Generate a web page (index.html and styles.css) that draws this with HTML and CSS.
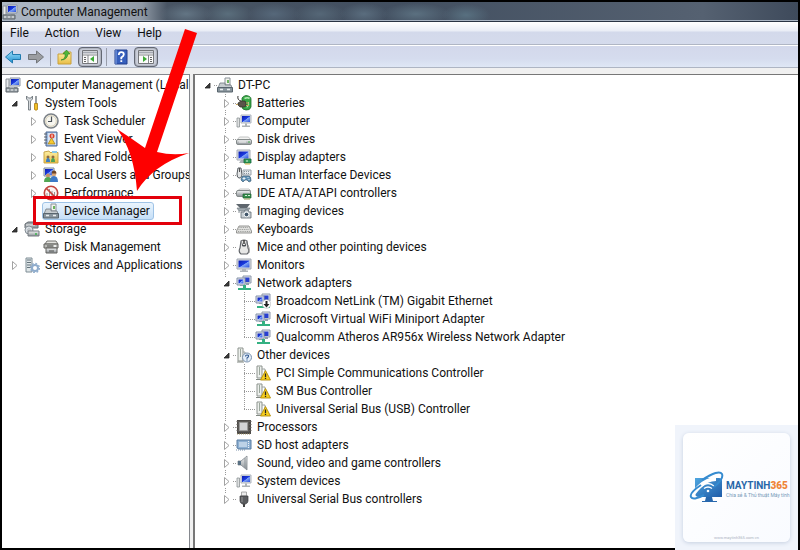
FILE: index.html
```html
<!DOCTYPE html>
<html lang="en">
<head>
<meta charset="utf-8">
<title>Computer Management</title>
<link rel="stylesheet" href="styles.css">
</head>
<body>
<svg class="defs" aria-hidden="true">
  <defs>
    <linearGradient id="metal" x1="0" y1="0" x2="0" y2="1"><stop offset="0" stop-color="#f4f5f5"/><stop offset="1" stop-color="#8a9095"/></linearGradient>
    <linearGradient id="screen" x1="0" y1="0" x2="1" y2="1"><stop offset="0" stop-color="#0a1bb0"/><stop offset=".5" stop-color="#1c3ce0"/><stop offset=".55" stop-color="#7fa4f8"/><stop offset="1" stop-color="#2b50dc"/></linearGradient>
    <linearGradient id="sky" x1="0" y1="0" x2="0" y2="1"><stop offset="0" stop-color="#9ee0fa"/><stop offset="1" stop-color="#1e8fd0"/></linearGradient>
    <linearGradient id="folder" x1="0" y1="0" x2="0" y2="1"><stop offset="0" stop-color="#fdf1a8"/><stop offset="1" stop-color="#e9bd45"/></linearGradient>
    <linearGradient id="brand" x1="0" y1="0" x2="1" y2="1"><stop offset="0" stop-color="#4fa6e0"/><stop offset="1" stop-color="#1f5ca8"/></linearGradient>
  </defs>
  <symbol id="i-manage" viewBox="0 0 16 16">
    <path d="M5 1h10v8H5z" fill="#dfe3ea" stroke="#8b93a0"/><path d="M6 2h8v6H6z" fill="url(#screen)"/>
    <path d="M1 2h3v9H1z" fill="#e8eaec" stroke="#8a9096"/><path d="M9 10h3v2H9z" fill="#a0a6ae"/>
    <path d="M1 11h12v4H1z" fill="#9aa2a8" stroke="#5c646a"/><path d="M2 13h2m2 0h2m2 0h2" stroke="#eef0f0"/>
  </symbol>
  <symbol id="i-tools" viewBox="0 0 16 16">
    <path d="M2.500 1v3l2 2v9h2V6l2-2V1L7 3H4.500z" fill="#d5d9dc" stroke="#6f777d" stroke-width=".9"/>
    <path d="M12 1v8" stroke="#80878c" stroke-width="1.600"/><path d="M10.500 8.500h3v6q-1.500 1.500-3 0z" fill="#f2c025" stroke="#a87a10" stroke-width=".8"/>
  </symbol>
  <symbol id="i-clock" viewBox="0 0 16 16">
    <circle cx="8" cy="8" r="7" fill="#f7f6ef" stroke="#7c8288" stroke-width="1.600"/><circle cx="8" cy="8" r="5.300" fill="none" stroke="#d6cfb8"/>
    <path d="M8.500 3.500v5H5" fill="none" stroke="#4a5158" stroke-width="1.200"/>
  </symbol>
  <symbol id="i-event" viewBox="0 0 16 16">
    <path d="M3 1h11v14H3z" fill="#9db9de" stroke="#4c6894"/><path d="M1 3h3M1 6h3M1 9h3M1 12h3" stroke="#5a6068"/>
    <path d="M5 2h8v12H5z" fill="#d8e4f4"/><circle cx="9" cy="5" r="2.500" fill="#d9412c"/><path d="M9 3.500v3" stroke="#fff"/>
    <path d="M5 13l3.500-6 3.500 6z" fill="#f7ca2f" stroke="#a07a12" stroke-width=".7"/>
  </symbol>
  <symbol id="i-shared" viewBox="0 0 16 16">
    <path d="M1 3l5-1 1 1.500h8V14H1z" fill="url(#folder)" stroke="#c9a548"/><path d="M9 2h5v2H9z" fill="#8ac7e8"/>
    <circle cx="5" cy="8" r="1.500" fill="#8a6a45"/><path d="M3 13q0-4 2-4t2 4z" fill="#3f7ec0"/>
    <circle cx="10" cy="8" r="1.500" fill="#8a6a45"/><path d="M8 13q0-4 2-4t2 4z" fill="#4ea157"/>
  </symbol>
  <symbol id="i-users" viewBox="0 0 16 16">
    <path d="M1 1h10v8H1z" fill="#dfe5ee" stroke="#7f8998"/><path d="M2 2h8v6H2z" fill="url(#screen)"/>
    <circle cx="5" cy="8.500" r="2" fill="#c79266"/><path d="M1 15q0-5 4-5t4 5z" fill="#52a653"/>
    <circle cx="11" cy="7" r="2.300" fill="#d9a577"/><path d="M8.700 6.500q0-3 2.300-3t2.500 3z" fill="#6d4527"/><path d="M7 15q0-6 4-6t4 6z" fill="#3c79c7"/>
  </symbol>
  <symbol id="i-perf" viewBox="0 0 16 16">
    <circle cx="8" cy="8" r="6.700" fill="#fbf3f2" stroke="#c2453e" stroke-width="1.600"/>
    <path d="M4 11V8m2.500 4V4m2.500 8V6m2.500 5V7" stroke="#999"/><path d="M3.500 3.500l9 9" stroke="#c2453e" stroke-width="1.700"/>
  </symbol>
  <symbol id="i-devmgr" viewBox="0 0 16 16">
    <path d="M8 1h5v7H8z" fill="#f3f4ee" stroke="#899198"/><path d="M10 3h2v3h-2z" fill="#6bb45e"/>
    <path d="M3 6h5v2h6l1 3H1z" fill="#c6cccf" stroke="#717a80" stroke-width=".8"/><path d="M.5 10.500h15v4.500H.5z" fill="#88949c" stroke="#58646d"/>
    <path d="M3 12.500h3m4 0h3" stroke="#e9edef" stroke-width="1.500"/>
  </symbol>
  <symbol id="i-storage" viewBox="0 0 16 16">
    <path d="M1 3l3-2h8l2 2v4H1z" fill="#9aa1a6" stroke="#666d72"/><path d="M2 4h9" stroke="#f2f2f2"/>
    <circle cx="5" cy="9" r="4" fill="#d8dee3" stroke="#858e95"/><circle cx="5" cy="9" r="1.200" fill="#fff" stroke="#79828a" stroke-width=".6"/>
    <path d="M4 10h11v5H4z" fill="url(#metal)" stroke="#747b80"/><path d="M11 13h2" stroke="#38b34a" stroke-width="1.500"/>
  </symbol>
  <symbol id="i-diskmgmt" viewBox="0 0 16 16">
    <path d="M2 5l2-3h9l2 3z" fill="#e3e3df" stroke="#73736f"/><path d="M1 5h14v4H1z" fill="#b9bab7" stroke="#62635f"/>
    <path d="M3 9h11v5H3z" fill="url(#metal)" stroke="#62635f"/><path d="M4 7h6m-4 5h5" stroke="#51524f"/><circle cx="12" cy="7" r="1" fill="#fff"/>
  </symbol>
  <symbol id="i-services" viewBox="0 0 16 16">
    <path d="M2 1h6v14H2z" fill="#dfe6e8" stroke="#7f8d95"/><path d="M3 3h4M3 5.500h4M3 8h4M3 10.500h4" stroke="#63717a"/>
    <circle cx="11" cy="11" r="3" fill="none" stroke="#8faccc" stroke-width="2"/><circle cx="11" cy="11" r="4.500" fill="none" stroke="#8faccc" stroke-width="1.300" stroke-dasharray="1.800 1.700"/>
  </symbol>
  <symbol id="i-battery" viewBox="0 0 16 16">
    <path d="M6 3q1-2 4-2.500Q15 1 15 4v8q-1 3.500-5 3-4-.5-4-3z" fill="#36a846" stroke="#1c6c2a" stroke-width=".8"/><path d="M8.500 3.500q3-1.500 5 0" fill="none" stroke="#b5ebb3" stroke-width="1.600"/><path d="M12.500 7q1 3-1.500 5.500" fill="none" stroke="#b5ebb3"/>
    <path d="M2 1q-1 4 3 5" fill="none" stroke="#333"/><path d="M2 8l3-2h4l1 2v3l-2 1H4L2 10z" fill="#5a554a" stroke="#2e2b24" stroke-width=".7"/><path d="M0 9.500h2m8-1.500h3m-3 2.500h3" stroke="#c3a35c" stroke-width="1.100"/>
  </symbol>
  <symbol id="i-computer" viewBox="0 0 16 16">
    <path d="M5 2h10v8H5z" fill="#d9dde3" stroke="#b0b6bf"/><path d="M6 3h8v6H6z" fill="url(#screen)"/>
    <path d="M1 5h2.500v9H1z" fill="#dfe1e2" stroke="#8c9294" stroke-width=".8"/><path d="M9 10.500h2v2h3v1.500H6v-1.500h3z" fill="#adb3b7"/>
  </symbol>
  <symbol id="i-disk" viewBox="0 0 16 16">
    <path d="M1 9l2.500-3h9L15 9z" fill="#f2f2f1" stroke="#b4b6b6" stroke-width=".8"/><rect x=".5" y="8.500" width="15" height="5" rx="1.500" fill="url(#metal)" stroke="#858b8b"/>
    <path d="M3 11h7" stroke="#eee"/><path d="M12 11h2" stroke="#48aa4e"/>
  </symbol>
  <symbol id="i-display" viewBox="0 0 16 16">
    <path d="M1 1h13v10H1z" fill="#dfe1e4" stroke="#a4aab4"/><path d="M2.500 2.500h10v7h-10z" fill="url(#screen)"/><path d="M5 11h4v3H3z" fill="#aab0b5"/>
    <path d="M8 10h7v4H8z" fill="#2f9d58" stroke="#17663a" stroke-width=".8"/><path d="M9 15h5" stroke="#d9b847"/><path d="M10 11.500h2v1h-2z" fill="#d7efd9"/>
  </symbol>
  <symbol id="i-hid" viewBox="0 0 16 16">
    <path d="M2 1h3l1 7q-1 4-3 3Q1 11 1 7z" fill="#e4e6e7" stroke="#555b60"/><path d="M3.500 1v4" stroke="#555"/>
    <path d="M7 3h8v5H7z" fill="#e4e8eb" stroke="#9aa3aa"/><path d="M8 4.500h6M8 6.500h6" stroke="#8b979f" stroke-dasharray="1 1"/>
    <path d="M5 13q1-5 3-4h5q2 0 2 5l-2 1-2-2H9l-2 2z" fill="#5e91b5" stroke="#3f6078" stroke-width=".7"/><path d="M8 10v3M6.500 11.500h3m2-1h1m0 2h1" stroke="#fff" stroke-width=".8"/>
  </symbol>
  <symbol id="i-ide" viewBox="0 0 16 16">
    <path d="M1 6l3-2h9l2 2z" fill="#f4f4f4" stroke="#a9adad" stroke-width=".7"/><rect x=".5" y="5.500" width="14" height="6" rx="1.500" fill="url(#metal)" stroke="#858b8b"/>
    <path d="M7 9h8v4H7z" fill="#358f4b" stroke="#1d6030" stroke-width=".7"/><path d="M9 10.500h2m1 0h2" stroke="#d4ead8"/><path d="M8 14h6" stroke="#9a9d5a"/>
  </symbol>
  <symbol id="i-imaging" viewBox="0 0 16 16">
    <path d="M0 1h14l-3 4H4z" fill="#5e666d"/><path d="M1 5h13l-2 3H3z" fill="#a2abb1" stroke="#6a7379" stroke-width=".6"/>
    <path d="M5 9h3l1-2h3l1 2h2v6H5z" fill="#c9d0d5" stroke="#606a71" stroke-width=".8"/><circle cx="10.500" cy="11.500" r="2.300" fill="#41566a" stroke="#f0f3f5"/><path d="M2 9h2" stroke="#8a9298"/>
  </symbol>
  <symbol id="i-keyboard" viewBox="0 0 16 16">
    <path d="M3 5h10l2.500 5v2H.5v-2z" fill="#e1e1df" stroke="#8a8b88" stroke-width=".9"/><path d="M3.500 6.500h9M2.500 8.500h11M2 10.500h12" stroke="#9d9f9c" stroke-dasharray="1 .8"/>
  </symbol>
  <symbol id="i-mouse" viewBox="0 0 16 16">
    <path d="M5 2q3-2 6 0l1 7q2 4-1 6H5q-3-2-1-6z" fill="#e7e7e6" stroke="#62656a" stroke-width="1.200"/><path d="M5.500 2L6 7q2 1 4 0l.5-5-1.500 4H7z" fill="#4a4e53"/><path d="M8 1v4" stroke="#222" stroke-width="1.300"/><path d="M12 6q2 3 1 8" fill="none" stroke="#999"/>
  </symbol>
  <symbol id="i-monitor" viewBox="0 0 16 16">
    <path d="M1 2h14v10H1z" fill="#dadde2" stroke="#a1a7b2"/><path d="M2.500 3.500h11v7h-11z" fill="url(#screen)"/><path d="M6 12h4v1.500h2V15H4v-1.500h2z" fill="#b0b5bb"/>
  </symbol>
  <symbol id="i-net" viewBox="0 0 16 16">
    <path d="M7 1h8v7H7z" fill="#e2e5ea" stroke="#8d98ab"/><path d="M8.500 2.500h5V7h-5z" fill="#283fd0"/><path d="M1 3h8v7H1z" fill="#e2e5ea" stroke="#8290a8"/><path d="M2.500 4.500h5v4h-5z" fill="url(#screen)"/>
    <path d="M4 10h3v1H4zm6-2h3v2h-3z" fill="#929dad"/><path d="M7 10h3v3h5v2H2v-2h5z" fill="#34b182"/>
  </symbol>
  <symbol id="i-netdown" viewBox="0 0 16 16">
    <use href="#i-net" width="16" height="16"/><circle cx="11.500" cy="11" r="4.300" fill="#fff" stroke="#b9bcc0" stroke-width=".7"/><path d="M10.500 8h2v3h2l-3 3.500-3-3.500h2z" fill="#222"/>
  </symbol>
  <symbol id="i-other" viewBox="0 0 16 16">
    <path d="M2 1h5v13H2z" fill="#edf0ed" stroke="#8d938e"/><path d="M4.500 2v8" stroke="#9ca79d"/><path d="M1 15h7" stroke="#828983"/><path d="M7 5h2v6" fill="none" stroke="#9ca3a0"/>
    <circle cx="11" cy="10.500" r="4.500" fill="#e4eef8" stroke="#7890ac"/><path d="M9.500 9.500q0-1.500 1.500-1.500 1.700 0 1.500 1.300-.1 1-1.500 1.700v.8m0 .8v1" fill="none" stroke="#315a92" stroke-width="1.200"/>
  </symbol>
  <symbol id="i-warn" viewBox="0 0 16 16">
    <path d="M2 1h5v12H2z" fill="#edf0ed" stroke="#8d938e"/><path d="M4.500 2v8" stroke="#9ca79d"/><path d="M1 14.500h6" stroke="#828983"/><path d="M7 4h3v4" fill="none" stroke="#9ca3a0"/>
    <path d="M10.500 5.500l5 9.500h-10z" fill="#f8cf1e" stroke="#b28c0b" stroke-width=".9"/><path d="M10.500 8.500v3.500m0 .8V14" stroke="#222" stroke-width="1.300"/>
  </symbol>
  <symbol id="i-cpu" viewBox="0 0 16 16">
    <path d="M1 1h14v14H1z" fill="#4c4a48"/><path d="M0 2.500h16M0 5.500h16M0 8.500h16M0 11.500h16" stroke="#77716a" stroke-width=".5"/><path d="M2 2h11v11H2z" fill="#5c5a57"/><path d="M3.500 3.500h8v8h-8z" fill="#d3d4d6" stroke="#9a9a99"/><path d="M1 15h14" stroke="#a29468" stroke-dasharray="1 1"/>
  </symbol>
  <symbol id="i-sd" viewBox="0 0 16 16">
    <path d="M1 3h14v9H3l-2-1z" fill="#8eb0d2" stroke="#587da2"/><path d="M3 5h8v5H3z" fill="#bdd2e7"/><path d="M12.500 4v7" stroke="#f0f4f8" stroke-dasharray="1 1"/><path d="M0 13h9" stroke="#7890aa" stroke-dasharray="1 1"/>
  </symbol>
  <symbol id="i-sound" viewBox="0 0 16 16">
    <path d="M2 6h3l6-5v14l-6-5H2z" fill="url(#metal)" stroke="#80888e" stroke-width=".8"/><path d="M2 6h3v4H2z" fill="#587083"/><path d="M9 3v10" stroke="#8b9398"/>
  </symbol>
  <symbol id="i-usb" viewBox="0 0 16 16">
    <path d="M5.500 1h5v4h-5z" fill="#ececec" stroke="#989898" stroke-width=".8"/><path d="M4 5h8v5q0 2-2.500 3h-3Q4 12 4 10z" fill="#5b5d60" stroke="#393b3d" stroke-width=".7"/><path d="M6 6v5" stroke="#999" /><path d="M8 13v3" stroke="#444" stroke-width="2"/>
  </symbol>
  <symbol id="t-back" viewBox="0 0 16 16"><path d="M.5 8L7.500 2v3.500h8v5h-8V14z" fill="url(#sky)" stroke="#207aae" stroke-linejoin="round"/></symbol>
  <symbol id="t-next" viewBox="0 0 16 16"><path d="M15.500 8L8.500 2v3.500h-8v5h8V14z" fill="#9b9da1" stroke="#727579" stroke-linejoin="round"/></symbol>
  <symbol id="t-up" viewBox="0 0 16 16"><path d="M1 5h5l1-2h7v12H1z" fill="url(#folder)" stroke="#c9a03c"/><path d="M4 11q5-1 4-6H6l3.500-4L13 5h-2q-1 6-7 6z" fill="#4fb63a" stroke="#2c8120" stroke-width=".6"/></symbol>
  <symbol id="t-tree" viewBox="0 0 16 16"><path d="M.5 1.500h15v13H.5z" fill="#fbfbfb" stroke="#75777b"/><path d="M1 3.500h14" stroke="#a5a9b2" stroke-width="2"/><path d="M1 6h14M6 6v8" stroke="#85878b"/><path d="M2 8.500h2m-2 2h2m-2 2h2" stroke="#666"/><path d="M12 7v6l-4-3z" fill="#3cab35"/></symbol>
  <symbol id="t-pane" viewBox="0 0 16 16"><path d="M.5 1.500h15v13H.5z" fill="#fbfbfb" stroke="#75777b"/><path d="M1 3.500h14" stroke="#a5a9b2" stroke-width="2"/><path d="M1 6h14M10.500 6v8" stroke="#85878b"/><path d="M12 8.500h2m-2 2h2m-2 2h2" stroke="#666"/><path d="M5 7v6l4-3z" fill="#3cab35"/></symbol>
  <symbol id="t-help" viewBox="0 0 16 16"><path d="M2 1h12v14H2z" fill="#365fbd" stroke="#203f8d"/><path d="M3 1v14" stroke="#88a7e5"/><path d="M5.800 6q0-2.800 2.500-2.800T10.800 5.500q0 1.500-2.500 3v1.800m0 1v1.800" fill="none" stroke="#fff" stroke-width="1.800"/></symbol>
  <symbol id="closed" viewBox="0 0 9 9"><path d="M2.500 .5v8l4.500-4z" fill="#fff" stroke="#a2a2a2"/></symbol>
  <symbol id="open" viewBox="0 0 9 9"><path d="M7 2v5H2z" fill="#3b3b3b" stroke="#222" stroke-width=".8"/></symbol>
</svg>

<div class="window">
  <header class="titlebar">
    <svg class="icon"><use href="#i-manage"/></svg>
    <h1>Computer Management</h1>
  </header>
  <nav class="menubar" aria-label="Menu">
    <button>File</button><button>Action</button><button>View</button><button>Help</button>
  </nav>
  <div class="toolbar" role="toolbar" aria-label="Tools">
    <button aria-label="Back"><svg class="icon"><use href="#t-back"/></svg></button>
    <button aria-label="Forward"><svg class="icon"><use href="#t-next"/></svg></button>
    <span class="divider"></span>
    <button aria-label="Up one level"><svg class="icon"><use href="#t-up"/></svg></button>
    <button class="pressed" aria-pressed="true" aria-label="Console tree"><svg class="icon"><use href="#t-tree"/></svg></button>
    <span class="divider"></span>
    <button aria-label="Help"><svg class="icon"><use href="#t-help"/></svg></button>
    <button class="pressed" aria-pressed="true" aria-label="Action pane"><svg class="icon"><use href="#t-pane"/></svg></button>
  </div>

  <div class="panes">
    <aside class="console">
      <ul class="tree" role="tree" aria-label="Console">
        <li role="treeitem">
          <div class="row"><svg class="icon"><use href="#i-manage"/></svg><span class="label">Computer Management (Local</span></div>
          <ul role="group">
            <li role="treeitem">
              <div class="row"><button class="twisty" aria-label="Collapse"><svg><use href="#open"/></svg></button><svg class="icon"><use href="#i-tools"/></svg><span class="label">System Tools</span></div>
              <ul class="nested" role="group">
                <li role="treeitem"><div class="row"><button class="twisty" aria-label="Expand"><svg><use href="#closed"/></svg></button><svg class="icon"><use href="#i-clock"/></svg><span class="label">Task Scheduler</span></div></li>
                <li role="treeitem"><div class="row"><button class="twisty" aria-label="Expand"><svg><use href="#closed"/></svg></button><svg class="icon"><use href="#i-event"/></svg><span class="label">Event Viewer</span></div></li>
                <li role="treeitem"><div class="row"><button class="twisty" aria-label="Expand"><svg><use href="#closed"/></svg></button><svg class="icon"><use href="#i-shared"/></svg><span class="label">Shared Folders</span></div></li>
                <li role="treeitem"><div class="row"><button class="twisty" aria-label="Expand"><svg><use href="#closed"/></svg></button><svg class="icon"><use href="#i-users"/></svg><span class="label">Local Users and Groups</span></div></li>
                <li role="treeitem"><div class="row"><button class="twisty" aria-label="Expand"><svg><use href="#closed"/></svg></button><svg class="icon"><use href="#i-perf"/></svg><span class="label">Performance</span></div></li>
                <li role="treeitem" aria-selected="true"><div class="row"><span class="twisty"></span><span class="selected"><svg class="icon"><use href="#i-devmgr"/></svg><span class="label">Device Manager</span></span></div></li>
              </ul>
            </li>
            <li role="treeitem">
              <div class="row"><button class="twisty" aria-label="Collapse"><svg><use href="#open"/></svg></button><svg class="icon"><use href="#i-storage"/></svg><span class="label">Storage</span></div>
              <ul class="nested" role="group">
                <li role="treeitem"><div class="row"><span class="twisty"></span><svg class="icon"><use href="#i-diskmgmt"/></svg><span class="label">Disk Management</span></div></li>
              </ul>
            </li>
            <li role="treeitem"><div class="row"><button class="twisty" aria-label="Expand"><svg><use href="#closed"/></svg></button><svg class="icon"><use href="#i-services"/></svg><span class="label">Services and Applications</span></div></li>
          </ul>
        </li>
      </ul>
    </aside>

    <main class="devices">
      <ul class="tree lined" role="tree" aria-label="Devices">
        <li role="treeitem">
          <div class="row"><button class="twisty" aria-label="Collapse"><svg><use href="#open"/></svg></button><svg class="icon"><use href="#i-devmgr"/></svg><span class="label">DT-PC</span></div>
          <ul class="nested" role="group">
            <li role="treeitem"><div class="row"><button class="twisty" aria-label="Expand"><svg><use href="#closed"/></svg></button><svg class="icon"><use href="#i-battery"/></svg><span class="label">Batteries</span></div></li>
            <li role="treeitem"><div class="row"><button class="twisty" aria-label="Expand"><svg><use href="#closed"/></svg></button><svg class="icon"><use href="#i-computer"/></svg><span class="label">Computer</span></div></li>
            <li role="treeitem"><div class="row"><button class="twisty" aria-label="Expand"><svg><use href="#closed"/></svg></button><svg class="icon"><use href="#i-disk"/></svg><span class="label">Disk drives</span></div></li>
            <li role="treeitem"><div class="row"><button class="twisty" aria-label="Expand"><svg><use href="#closed"/></svg></button><svg class="icon"><use href="#i-display"/></svg><span class="label">Display adapters</span></div></li>
            <li role="treeitem"><div class="row"><button class="twisty" aria-label="Expand"><svg><use href="#closed"/></svg></button><svg class="icon"><use href="#i-hid"/></svg><span class="label">Human Interface Devices</span></div></li>
            <li role="treeitem"><div class="row"><button class="twisty" aria-label="Expand"><svg><use href="#closed"/></svg></button><svg class="icon"><use href="#i-ide"/></svg><span class="label">IDE ATA/ATAPI controllers</span></div></li>
            <li role="treeitem"><div class="row"><button class="twisty" aria-label="Expand"><svg><use href="#closed"/></svg></button><svg class="icon"><use href="#i-imaging"/></svg><span class="label">Imaging devices</span></div></li>
            <li role="treeitem"><div class="row"><button class="twisty" aria-label="Expand"><svg><use href="#closed"/></svg></button><svg class="icon"><use href="#i-keyboard"/></svg><span class="label">Keyboards</span></div></li>
            <li role="treeitem"><div class="row"><button class="twisty" aria-label="Expand"><svg><use href="#closed"/></svg></button><svg class="icon"><use href="#i-mouse"/></svg><span class="label">Mice and other pointing devices</span></div></li>
            <li role="treeitem"><div class="row"><button class="twisty" aria-label="Expand"><svg><use href="#closed"/></svg></button><svg class="icon"><use href="#i-monitor"/></svg><span class="label">Monitors</span></div></li>
            <li role="treeitem">
              <div class="row"><button class="twisty" aria-label="Collapse"><svg><use href="#open"/></svg></button><svg class="icon"><use href="#i-net"/></svg><span class="label">Network adapters</span></div>
              <ul class="nested" role="group">
                <li role="treeitem"><div class="row"><span class="twisty leaf"></span><svg class="icon"><use href="#i-netdown"/></svg><span class="label">Broadcom NetLink (TM) Gigabit Ethernet</span></div></li>
                <li role="treeitem"><div class="row"><span class="twisty leaf"></span><svg class="icon"><use href="#i-net"/></svg><span class="label">Microsoft Virtual WiFi Miniport Adapter</span></div></li>
                <li role="treeitem"><div class="row"><span class="twisty leaf"></span><svg class="icon"><use href="#i-net"/></svg><span class="label">Qualcomm Atheros AR956x Wireless Network Adapter</span></div></li>
              </ul>
            </li>
            <li role="treeitem">
              <div class="row"><button class="twisty" aria-label="Collapse"><svg><use href="#open"/></svg></button><svg class="icon"><use href="#i-other"/></svg><span class="label">Other devices</span></div>
              <ul class="nested" role="group">
                <li role="treeitem"><div class="row"><span class="twisty leaf"></span><svg class="icon"><use href="#i-warn"/></svg><span class="label">PCI Simple Communications Controller</span></div></li>
                <li role="treeitem"><div class="row"><span class="twisty leaf"></span><svg class="icon"><use href="#i-warn"/></svg><span class="label">SM Bus Controller</span></div></li>
                <li role="treeitem"><div class="row"><span class="twisty leaf"></span><svg class="icon"><use href="#i-warn"/></svg><span class="label">Universal Serial Bus (USB) Controller</span></div></li>
              </ul>
            </li>
            <li role="treeitem"><div class="row"><button class="twisty" aria-label="Expand"><svg><use href="#closed"/></svg></button><svg class="icon"><use href="#i-cpu"/></svg><span class="label">Processors</span></div></li>
            <li role="treeitem"><div class="row"><button class="twisty" aria-label="Expand"><svg><use href="#closed"/></svg></button><svg class="icon"><use href="#i-sd"/></svg><span class="label">SD host adapters</span></div></li>
            <li role="treeitem"><div class="row"><button class="twisty" aria-label="Expand"><svg><use href="#closed"/></svg></button><svg class="icon"><use href="#i-sound"/></svg><span class="label">Sound, video and game controllers</span></div></li>
            <li role="treeitem"><div class="row"><button class="twisty" aria-label="Expand"><svg><use href="#closed"/></svg></button><svg class="icon"><use href="#i-computer"/></svg><span class="label">System devices</span></div></li>
            <li role="treeitem"><div class="row"><button class="twisty" aria-label="Expand"><svg><use href="#closed"/></svg></button><svg class="icon"><use href="#i-usb"/></svg><span class="label">Universal Serial Bus controllers</span></div></li>
          </ul>
        </li>
      </ul>
    </main>
  </div>
</div>

<div class="highlight"></div>
<svg class="arrow" viewBox="0 0 72 162" aria-hidden="true"><path d="M68 0l12 4-40 119q16 4 32 1-36 12-52 38Q17 122 0 100q14 9 28 19z" fill="#fe0000"/></svg>

<div class="watermark">
  <div class="card">
    <div class="brand">
      <svg class="logo" viewBox="0 0 36 36" aria-hidden="true">
        <path d="M6 7h24q3 0 3 3v16H10q-4 0-4-4z" fill="url(#brand)"/><path d="M17 26h6l1 4h4v1H13v-1h3z" fill="#2868ad"/>
        <path d="M13 15q6-5 12 0M15 17.500q4-3 8 0" fill="none" stroke="#fff" stroke-width="1.300"/><circle cx="19" cy="20" r="1.300" fill="#fff"/>
        <path d="M27 8Q18 8 10 16 2 24 4 28q2 2 8-1" fill="none" stroke="#fff" stroke-width="4"/>
        <path d="M13 9Q30-2 33 3q2 5-8 13M12 14Q0 22 2 26q2 4 13-2" fill="none" stroke="#358bd0" stroke-width="2"/>
      </svg>
      <div><p class="name">MAYTINH<b>365</b></p><p class="tagline">Chia sẻ &amp; Thủ thuật Máy tính</p></div>
    </div>
    <p class="site">www.maytinh365.com.vn</p>
  </div>
</div>
</body>
</html>
```
FILE: styles.css
```css
* { box-sizing: border-box; }

body {
  margin: 0;
  background: #000;
  color: #111;
  font: 12px/18px Roboto, "Noto Sans", sans-serif;
}

h1, p, ul { margin: 0; padding: 0; }
ul { list-style: none; }
button { border: 0; padding: 0; background: none; color: inherit; font: inherit; }
.defs { position: absolute; width: 0; height: 0; }
.icon { width: 16px; height: 16px; flex: none; display: block; }

.window {
  display: flex;
  flex-direction: column;
  min-height: 100vh;
  border: 2px solid #000;
  background: #f0f0f0;
}

.titlebar {
  display: flex;
  align-items: center;
  gap: 3px;
  height: 20px;
  border-bottom: 1px solid #293443;
  box-shadow: inset 0 -1px #a9b4c2;
  background:
    radial-gradient(ellipse 26px 11px at 184px 12px, #637584, transparent),
    radial-gradient(ellipse 24px 11px at 226px 12px, #5a6e7c, transparent),
    radial-gradient(ellipse 26px 11px at 272px 12px, #56687a, transparent),
    radial-gradient(ellipse 26px 11px at 318px 12px, #556777, transparent),
    radial-gradient(ellipse 24px 11px at 362px 12px, #5a6d7e, transparent),
    radial-gradient(ellipse 34px 11px at 414px 12px, #5b7080, transparent),
    radial-gradient(ellipse 24px 11px at 464px 13px, #587080, transparent),
    linear-gradient(90deg, #aeb8c4 0, #9ea7b4 100px, #8f99a5 140px, #485463 165px, #424f60 50%, #556171 88%, #3e4a5b);
}
.titlebar h1 { font: inherit; }

.menubar {
  display: flex;
  gap: 16px;
  height: 23px;
  padding: 0 8px;
  border-bottom: 1px solid #b0b6c4;
  background: linear-gradient(#fff, #e9edf6 9px, #d3d9eb 10px, #d5dbec);
}

.toolbar {
  display: flex;
  align-items: center;
  gap: 3px;
  height: 23px;
  padding: 0 1px;
  border-top: 1px solid #fff;
  border-bottom: 1px solid #aeb5c3;
  background: linear-gradient(#d3d8eb, #d5dcee 60%, #dfe7f5);
}
.toolbar button { display: grid; place-items: center; width: 20px; height: 20px; }
.toolbar .pressed { width: 24px; border: 1px solid #626773; border-radius: 4px; background: #cdd1dc; box-shadow: inset 0 0 2px #626773; }
.divider { width: 1px; height: 18px; margin: 0 1px; background: #989daa; }

.panes { display: flex; flex: 1; margin-top: 6px; gap: 3px; }
.console {
  flex: 0 0 188px;
  overflow: hidden;
  padding: 1px 0 0 3px;
  border-top: 1px solid #85888e;
  border-right: 1px solid #85888e;
  background: #fff;
}
.devices {
  flex: 1;
  min-width: 0;
  padding: 1px 0 0 3px;
  border-top: 1px solid #777;
  border-left: 2px solid #777;
  background: #fff;
}

.row { display: flex; align-items: center; height: 18px; white-space: nowrap; }
.label { padding-left: 5px; }
.nested { padding-left: 19px; }
.twisty { flex: none; display: grid; place-items: center; width: 19px; height: 12px; }
.twisty svg { width: 9px; height: 9px; display: block; }

.selected {
  display: flex;
  align-items: center;
  height: 18px;
  margin: 0 -1px;
  padding-right: 3px;
  border: 1px solid #9fc3e6;
  border-radius: 3px;
  background: linear-gradient(#eaf4fd, #c6dff7);
}

/* Dotted guide lines between parents and children */
.lined .nested {
  background: repeating-linear-gradient(#999 0 1px, transparent 1px 2px) 27px 0 / 1px calc(100% - 9px) no-repeat;
}
.lined button.twisty { background: repeating-linear-gradient(90deg, #999 0 1px, #fff 1px 2px) 16px 6px / 3px 1px no-repeat, #fff; }
.lined .leaf { background: repeating-linear-gradient(90deg, #999 0 1px, transparent 1px 2px) 8px 6px / 11px 1px no-repeat; }

.highlight {
  position: absolute;
  left: 33px;
  top: 196px;
  width: 149px;
  height: 29px;
  border: 3px solid #e3000b;
}
.arrow { position: absolute; left: 117px; top: 29px; width: 72px; height: 162px; overflow: visible; }

.watermark {
  position: absolute;
  right: 2px;
  bottom: 0;
  width: 123px;
  height: 125px;
  padding: 8px;
  background: #f0f4fb;
}
.card {
  display: flex;
  flex-direction: column;
  height: 100%;
  border-radius: 6px;
  background: linear-gradient(135deg, #fff, #f9fbff);
  box-shadow: 0 1px 4px #c5d0e0;
}
.brand { flex: 1; display: flex; align-items: center; padding: 10px 0 0 6px; gap: 1px; white-space: nowrap; }
.logo { width: 36px; height: 36px; flex: none; }
.name { color: #2867a8; font: 700 10px/12px Roboto, sans-serif; }
.name b { color: #ef8538; }
.tagline { color: #7599b8; font: 5px/6px Roboto, sans-serif; }
.site { color: #aab2be; font: 4px/8px Roboto, sans-serif; text-align: center; }
```
